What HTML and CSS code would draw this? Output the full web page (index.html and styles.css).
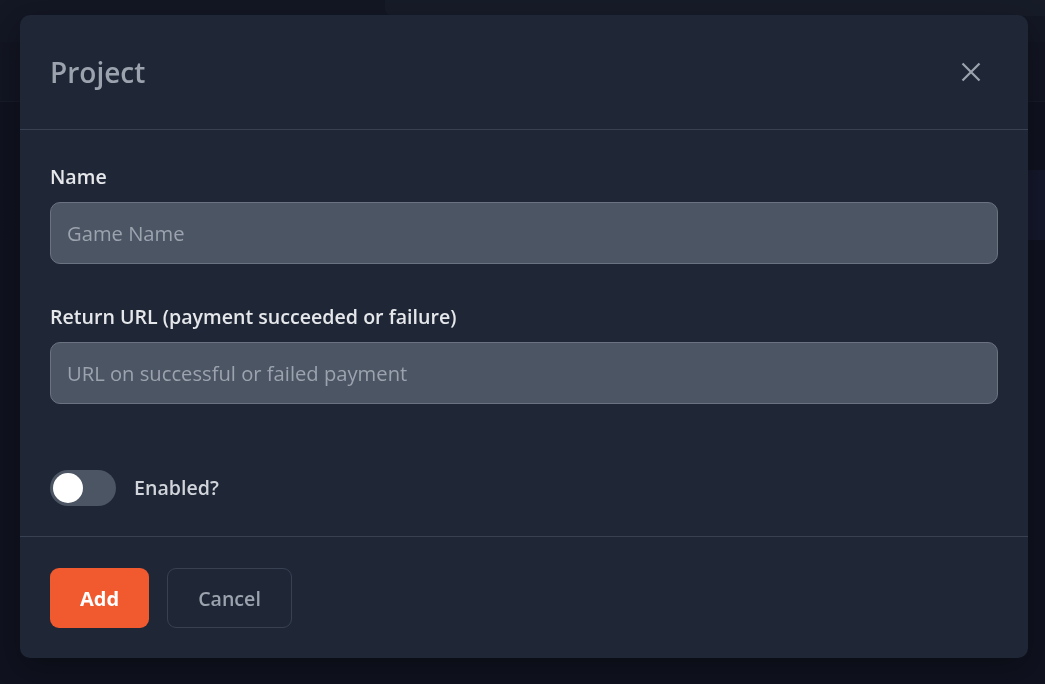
FILE: index.html
```html
<!DOCTYPE html>
<html lang="en">
<head>
<meta charset="utf-8">
<title>Project</title>
<link rel="stylesheet" href="styles.css">
</head>
<body>
<div class="page">
  <div class="topbar"><div class="topbar-panel"></div></div>
  <div class="band"></div>
  <div class="hero"></div>
</div>
<div class="backdrop"></div>
<div class="modal" role="dialog" aria-labelledby="modal-title">
  <div class="modal-header">
    <h2 class="modal-title" id="modal-title">Project</h2>
    <button class="close-btn" type="button" aria-label="Close">
      <svg width="20" height="20" viewBox="0 0 20 20" fill="none" stroke="#9ca3af" stroke-width="2.2" stroke-linecap="butt"><path d="M1.5 1.5L18.5 18.5M18.5 1.5L1.5 18.5"/></svg>
    </button>
  </div>
  <div class="modal-body">
    <div class="field">
      <label class="field-label" for="name">Name</label>
      <input class="field-input" id="name" type="text" placeholder="Game Name">
    </div>
    <div class="field">
      <label class="field-label" for="url">Return URL (payment succeeded or failure)</label>
      <input class="field-input" id="url" type="text" placeholder="URL on successful or failed payment">
    </div>
    <label class="toggle-row">
      <span class="toggle"><span class="toggle-knob"></span></span>
      <span class="toggle-label">Enabled?</span>
    </label>
  </div>
  <div class="modal-footer">
    <button class="btn btn-primary" type="button">Add</button>
    <button class="btn btn-secondary" type="button">Cancel</button>
  </div>
</div>
</body>
</html>
```
FILE: styles.css
```css
* { box-sizing: border-box; }
html, body { margin: 0; padding: 0; }
body {
  background: #121624;
  font-family: "Open Sans", "Noto Sans", "Liberation Sans", sans-serif;
  width: 1045px;
  height: 684px;
  overflow: hidden;
}
.page { width: 1045px; height: 684px; }
.topbar {
  height: 42px;
  background: #171c2a;
  display: flex;
}
.topbar-panel {
  margin-left: 385px;
  flex: 1;
  height: 16px;
  background: #1c2231;
  border-bottom-left-radius: 8px;
}
.band {
  height: 60px;
  background: #151a28;
  border-bottom: 1px solid #1b2030;
}
.hero {
  height: 70px;
  margin-top: 68px;
  background: linear-gradient(100deg, #121624 0%, #161a2e 70%, #191d34 100%);
}
.backdrop {
  position: fixed;
  inset: 0;
  background: rgba(10, 12, 20, 0.25);
}
.modal {
  position: fixed;
  left: 20px;
  top: 15px;
  width: 1008px;
  height: 643px;
  background: #1f2736;
  border-radius: 10px;
  box-shadow: 0 10px 30px rgba(0, 0, 0, 0.35);
  color: #e5e7eb;
}
.modal-header {
  height: 115px;
  border-bottom: 1px solid #374151;
  display: flex;
  align-items: center;
  justify-content: space-between;
  padding: 0 47px 0 30px;
}
.modal-title {
  margin: 0;
  font-size: 28px;
  font-weight: 600;
  color: #9ca3af;
  line-height: 36px;
}
.close-btn {
  background: none;
  border: 0;
  padding: 0;
  width: 20px;
  height: 20px;
  display: flex;
  cursor: pointer;
}
.modal-body {
  padding: 33px 30px 30px;
  border-bottom: 1px solid #374151;
}
.field { margin-bottom: 39px; }
.field:last-of-type { margin-bottom: 0; }
.field-label {
  display: block;
  font-size: 19.6px;
  font-weight: 600;
  line-height: 28px;
  color: #e5e7eb;
  margin-bottom: 11px;
}
.field-input {
  display: block;
  width: 100%;
  height: 62px;
  padding: 0 16px;
  background: #4b5563;
  border: 1px solid #6b7280;
  border-radius: 10px;
  font-family: inherit;
  font-size: 20.2px;
  color: #e5e7eb;
  outline: none;
}
.field-input::placeholder { color: #9ca3af; opacity: 1; }
.toggle-row {
  margin-top: 66px;
  display: flex;
  align-items: center;
  gap: 18px;
  height: 36px;
}
.toggle {
  width: 66px;
  height: 36px;
  border-radius: 18px;
  background: #4b5563;
  display: flex;
  align-items: center;
  padding-left: 3px;
}
.toggle-knob {
  width: 30px;
  height: 30px;
  border-radius: 50%;
  background: #ffffff;
}
.toggle-label {
  font-size: 19.6px;
  font-weight: 600;
  line-height: 28px;
  color: #d1d5db;
}
.modal-footer {
  padding: 31px 30px 30px;
  display: flex;
  gap: 18px;
}
.btn {
  height: 60px;
  border-radius: 9px;
  font-family: inherit;
  cursor: pointer;
}
.btn-primary {
  padding: 0 30px;
  background: #f1592f;
  border: 0;
  color: #ffffff;
  font-size: 20px;
  font-weight: 700;
}
.btn-secondary {
  padding: 0 30px;
  background: transparent;
  border: 1px solid #374151;
  color: #9ca3af;
  font-size: 19.6px;
  font-weight: 600;
}
```
